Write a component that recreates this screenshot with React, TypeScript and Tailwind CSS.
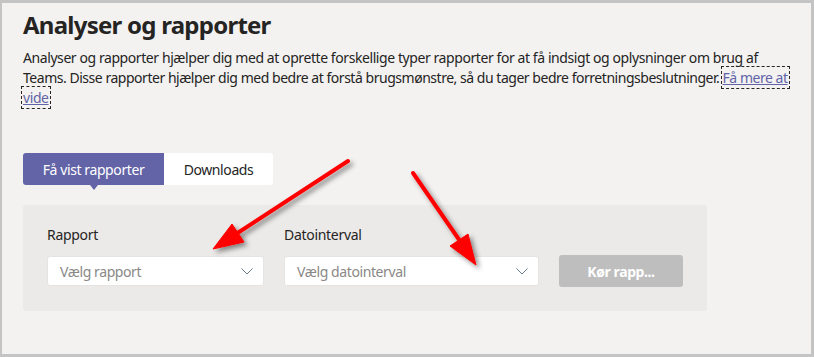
import { ReactNode } from 'react';

const font = { fontFamily: '"Noto Sans", "Open Sans", sans-serif' };

function Line({ children, tight }: { children: ReactNode; tight?: boolean }) {
  return (
    <div className={`whitespace-nowrap h-[20px] leading-[20px] ${tight ? 'tracking-[-0.47px]' : 'tracking-[-0.42px]'}`}>
      {children}
    </div>
  );
}

const linkCls =
  'text-[#6264a7] underline outline-1 outline-dashed outline-[#252423] outline-offset-[1px]';

function Select({ placeholder, width }: { placeholder: string; width: string }) {
  return (
    <div className={`${width} h-[30px] bg-white rounded-[3px] border border-[#e6e4e2] flex items-center justify-between pl-[12px] pr-[10px]`}>
      <span className="text-[14px] tracking-[-0.4px] text-[#8a8886]">{placeholder}</span>
      <svg width="12" height="7" viewBox="0 0 12 7" fill="none">
        <polyline points="0.5,0.5 6,6 11.5,0.5" stroke="#6e7b8b" strokeWidth="1" />
      </svg>
    </div>
  );
}

function Arrows() {
  return (
    <svg className="absolute inset-0 pointer-events-none" width="814" height="357" viewBox="0 0 814 357">
      <defs>
        <filter id="sh" x="-20%" y="-20%" width="140%" height="140%">
          <feDropShadow dx="3" dy="3" stdDeviation="2.5" floodColor="#000" floodOpacity="0.45" />
        </filter>
      </defs>
      <g filter="url(#sh)" fill="#ff0000" stroke="#ff0000">
        <line x1="348" y1="161" x2="236" y2="234" strokeWidth="4" strokeLinecap="round" />
        <polygon points="213,249 244,242 232,224" strokeWidth="1" strokeLinejoin="round" />
        <line x1="413" y1="173" x2="460" y2="241" strokeWidth="4" strokeLinecap="round" />
        <polygon points="476,265 468,234 450,246" strokeWidth="1" strokeLinejoin="round" />
      </g>
    </svg>
  );
}

export default function App() {
  return (
    <div className="relative w-[814px] h-[357px] bg-[#c4c4c4] pl-[2px] pt-[3px] pr-[3px] pb-[3px]" style={font}>
      <div className="h-full bg-[#f3f2f1] text-[#252423] pl-[21px]">
        <div className="pt-[6px]">
          <h1 className="text-[24px] font-bold leading-[32px] tracking-[-0.75px] whitespace-nowrap">Analyser og rapporter</h1>
        </div>
        <div className="mt-[7px] text-[14px]">
          <Line>Analyser og rapporter hjælper dig med at oprette forskellige typer rapporter for at få indsigt og oplysninger om brug af</Line>
          <Line tight>
            Teams. Disse rapporter hjælper dig med bedre at forstå brugsmønstre, så du tager bedre forretningsbeslutninger.{' '}
            <span className={linkCls}>Få mere at</span>
          </Line>
          <Line>
            <span className={linkCls}>vide</span>
          </Line>
        </div>

        <div className="mt-[45px] flex text-[14px] tracking-[-0.4px]">
          <div className="relative w-[141px] h-[32px] bg-[#6264a7] text-white rounded-l-[3px] flex items-center justify-center">
            Få vist rapporter
            <div className="absolute left-[67px] top-[32px] w-0 h-0 border-l-[4px] border-r-[4px] border-t-[5px] border-l-transparent border-r-transparent border-t-[#6264a7]" />
          </div>
          <div className="w-[109px] h-[32px] bg-white rounded-r-[3px] flex items-center justify-center">Downloads</div>
        </div>

        <div className="mt-[20px] w-[684px] h-[106px] bg-[#ebeae8] rounded-[3px] pl-[24px] pt-[20px]">
          <div className="flex items-end gap-[20px]">
            <div className="flex flex-col gap-[11px]">
              <span className="text-[14px] leading-[20px] tracking-[-0.3px]">Rapport</span>
              <Select placeholder="Vælg rapport" width="w-[217px]" />
            </div>
            <div className="flex flex-col gap-[11px]">
              <span className="text-[14px] leading-[20px] tracking-[-0.3px]">Datointerval</span>
              <Select placeholder="Vælg datointerval" width="w-[255px]" />
            </div>
            <div className="w-[124px] h-[32px] -mb-[1px] bg-[#bebebe] rounded-[3px] flex items-center justify-center text-white text-[14px] font-bold tracking-[-0.4px]">
              Kør rapp...
            </div>
          </div>
        </div>
      </div>
      <Arrows />
    </div>
  );
}
